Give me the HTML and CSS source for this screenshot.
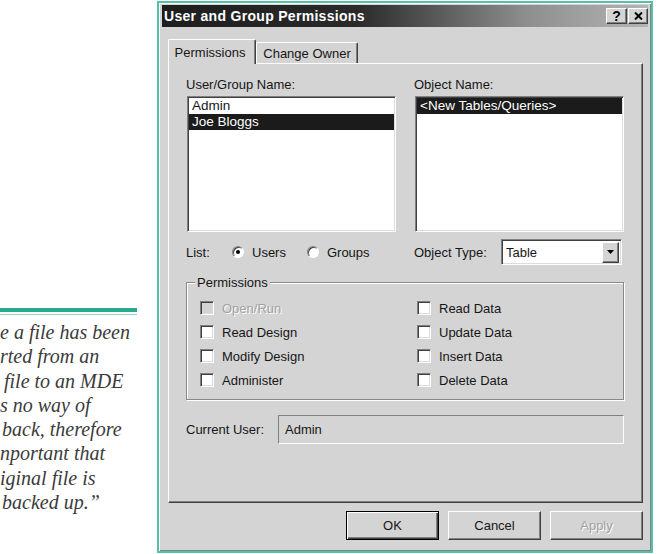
FILE: index.html
```html
<!DOCTYPE html>
<html lang="en">

<head>
    <meta charset="UTF-8">
    <meta name="viewport" content="width=device-width, initial-scale=1.0">
    <title>User and Group Permissions</title>
    <link rel="stylesheet" href="styles.css">
</head>

<body>
    <div class="margin-note">
        <div class="rule"></div>
        <div class="quote">
            <div class="line">e a file has been</div>
            <div class="line">rted from an</div>
            <div class="line indent">file to an MDE</div>
            <div class="line">s no way of</div>
            <div class="line nudge">back, therefore</div>
            <div class="line">nportant that</div>
            <div class="line">iginal file is</div>
            <div class="line nudge">backed up.&rdquo;</div>
        </div>
    </div>

    <div class="dialog">
        <div class="titlebar">
            <span class="title">User and Group Permissions</span>
            <div class="caption-buttons">
                <span class="cap-btn help">?</span>
                <span class="cap-btn close">
                    <svg width="9" height="8" viewBox="0 0 9 8">
                        <path d="M1 0.5 L8 7.5 M8 0.5 L1 7.5" stroke="#000" stroke-width="2" fill="none" />
                    </svg>
                </span>
            </div>
        </div>

        <div class="tabs">
            <div class="tab active">Permissions</div>
            <div class="tab">Change Owner</div>
        </div>

        <div class="panel">
            <div class="columns">
                <div class="col">
                    <div class="field-label">User/Group Name:</div>
                    <ul class="listbox">
                        <li>Admin</li>
                        <li class="selected">Joe Bloggs</li>
                    </ul>
                    <div class="option-row">
                        <span class="list-label">List:</span>
                        <span class="radio checked"></span>
                        <span class="radio-text">Users</span>
                        <span class="radio"></span>
                        <span class="radio-text">Groups</span>
                    </div>
                </div>
                <div class="col">
                    <div class="field-label">Object Name:</div>
                    <ul class="listbox">
                        <li class="selected">&lt;New Tables/Queries&gt;</li>
                    </ul>
                    <div class="option-row">
                        <span>Object Type:</span>
                        <div class="combo">
                            <span class="combo-value">Table</span>
                            <span class="combo-arrow">
                                <svg width="7" height="4" viewBox="0 0 7 4">
                                    <path d="M0 0 H7 L3.5 4 Z" fill="#000" />
                                </svg>
                            </span>
                        </div>
                    </div>
                </div>
            </div>

            <fieldset class="perms">
                <legend>Permissions</legend>
                <div class="perm-grid">
                    <div class="check disabled"><span class="box"></span>Open/Run</div>
                    <div class="check"><span class="box"></span>Read Data</div>
                    <div class="check"><span class="box"></span>Read Design</div>
                    <div class="check"><span class="box"></span>Update Data</div>
                    <div class="check"><span class="box"></span>Modify Design</div>
                    <div class="check"><span class="box"></span>Insert Data</div>
                    <div class="check"><span class="box"></span>Administer</div>
                    <div class="check"><span class="box"></span>Delete Data</div>
                </div>
            </fieldset>

            <div class="current-user">
                <span class="cu-label">Current User:</span>
                <div class="cu-field">Admin</div>
            </div>
        </div>

        <div class="buttons">
            <div class="btn default">OK</div>
            <div class="btn">Cancel</div>
            <div class="btn disabled">Apply</div>
        </div>
    </div>
</body>

</html>
```

FILE: styles.css
```css
body {
    margin: 0;
    width: 670px;
    height: 554px;
    overflow: hidden;
    background: #fff;
    display: flex;
    align-items: flex-start;
    font-family: "Liberation Sans", Arial, sans-serif;
}

/* quote on the left page margin */
.margin-note {
    width: 157px;
    flex: none;
    padding-top: 308px;
    overflow: hidden;
}

.rule {
    width: 137px;
    height: 2px;
    border-top: 4px solid #2aa98f;
    border-bottom: 1px solid #93d6c7;
}

.quote {
    margin-top: 5px;
    font-family: "Liberation Serif", "Times New Roman", serif;
    font-style: italic;
    font-size: 20px;
    line-height: 24.3px;
    color: #3b3b3b;
    white-space: nowrap;
}

.quote .indent {
    margin-left: 4px;
}

.quote .nudge {
    margin-left: 2px;
}

/* dialog window */
.dialog {
    width: 496px;
    height: 552px;
    margin-top: 1px;
    box-sizing: border-box;
    border: 2px solid #52c3a9;
    background: #d4d4d4;
    padding: 3px;
    display: flex;
    flex-direction: column;
    box-shadow: inset 1px 1px #fff, inset -1px -1px #808080;
    font-size: 13px;
    color: #161616;
}

.titlebar {
    height: 22px;
    flex: none;
    display: flex;
    align-items: center;
    justify-content: space-between;
    padding-left: 2px;
    margin-top: -1px;
    background: linear-gradient(to right, #1e1e1e, #2a2a2a 40%, #8e8e8e 75%, #b4b4b4);
}

.title {
    color: #fff;
    font-weight: bold;
    font-size: 14px;
    letter-spacing: 0.3px;
}

.caption-buttons {
    display: flex;
    gap: 1px;
}

.cap-btn {
    width: 19px;
    height: 14px;
    background: #d4d4d4;
    border: 1px solid;
    border-color: #fff #404040 #404040 #fff;
    box-shadow: inset -1px -1px #808080;
    display: flex;
    align-items: center;
    justify-content: center;
    font-weight: bold;
    font-size: 14px;
    color: #000;
}

.cap-btn.close {
    width: 18px;
}

/* tabs */
.tabs {
    display: flex;
    align-items: flex-end;
    height: 25px;
    margin: 11px 0 0 6px;
}

.tab {
    height: 21px;
    width: 102px;
    box-sizing: border-box;
    display: flex;
    align-items: center;
    justify-content: center;
    border: 1px solid;
    border-color: #fff #404040 transparent #fff;
    border-bottom: none;
    border-radius: 2px 2px 0 0;
    box-shadow: inset -1px 0 #808080;
    padding-top: 1px;
}

.tab.active {
    width: 88px;
    height: 25px;
    margin-bottom: -1px;
    position: relative;
    z-index: 1;
    background: #d4d4d4;
    padding: 0 4px 0 0;
}

/* tab page */
.panel {
    margin-left: 6px;
    width: 475px;
    height: 440px;
    flex: none;
    box-sizing: border-box;
    border: 1px solid;
    border-color: #fff #404040 #404040 #fff;
    box-shadow: inset -1px -1px #808080;
    padding: 13px 18px 0 17px;
}

.columns {
    display: grid;
    grid-template-columns: 1fr 1fr;
    column-gap: 18px;
}

.field-label {
    line-height: 15px;
    margin-bottom: 4px;
}

.listbox {
    list-style: none;
    margin: 0 0 0 1px;
    padding: 1px 0 0;
    height: 136px;
    box-sizing: border-box;
    background: #fff;
    border: 1px solid;
    border-color: #808080 #fff #fff #808080;
    box-shadow: inset 1px 1px #404040, inset -1px -1px #dcdcdc;
}

.listbox li {
    height: 16px;
    line-height: 16px;
    padding-left: 3px;
    margin: 0 1px 0 1px;
    font-size: 13.5px;
}

.listbox li.selected {
    background: #1b1b1b;
    color: #fff;
}

.option-row {
    display: flex;
    align-items: center;
    height: 26px;
    margin-top: 7px;
}

.list-label {
    width: 46px;
}

.radio {
    width: 10px;
    height: 10px;
    border-radius: 50%;
    background: #fff;
    border: 1px solid;
    border-color: #808080 #fff #fff #808080;
    box-shadow: inset 1px 1px #404040;
    display: flex;
    align-items: center;
    justify-content: center;
}

.radio.checked::after {
    content: "";
    width: 4px;
    height: 4px;
    border-radius: 50%;
    background: #000;
}

.radio-text {
    margin: 0 21px 0 8px;
}

.combo {
    margin-left: auto;
    margin-right: 2px;
    width: 121px;
    height: 26px;
    box-sizing: border-box;
    background: #fff;
    border: 1px solid;
    border-color: #808080 #fff #fff #808080;
    box-shadow: inset 1px 1px #404040, inset -1px -1px #dcdcdc;
    display: flex;
    align-items: center;
    padding: 2px 2px 2px 4px;
}

.combo-value {
    flex: 1;
}

.combo-arrow {
    width: 15px;
    height: 19px;
    background: #d4d4d4;
    border: 1px solid;
    border-color: #fff #404040 #404040 #fff;
    box-shadow: inset -1px -1px #808080;
    display: flex;
    align-items: center;
    justify-content: center;
}

/* permissions group */
.perms {
    margin: 10px 0 0;
    padding: 6px 0 7px 8px;
    border: 1px solid #888;
    box-shadow: inset 1px 1px #fff, 1px 1px #fff;
}

.perms legend {
    padding: 0 2px;
    line-height: 15px;
    background: #d4d4d4;
}

.perm-grid {
    display: grid;
    grid-template-columns: 217px 1fr;
    grid-auto-rows: 24px;
    margin-left: 5px;
}

.check {
    display: flex;
    align-items: center;
    gap: 8px;
}

.box {
    width: 12px;
    height: 12px;
    background: #fff;
    border: 1px solid;
    border-color: #808080 #fff #fff #808080;
    box-shadow: inset 1px 1px #404040, inset -1px -1px #dcdcdc;
}

.check.disabled {
    color: #a2a2a2;
    text-shadow: 1px 1px #fff;
}

.check.disabled .box {
    background: #d4d4d4;
}

/* current user */
.current-user {
    display: flex;
    align-items: center;
    margin-top: 15px;
}

.cu-label {
    width: 92px;
}

.cu-field {
    flex: 1;
    height: 29px;
    box-sizing: border-box;
    display: flex;
    align-items: center;
    padding-left: 6px;
    border: 1px solid;
    border-color: #808080 #fff #fff #808080;
}

/* dialog buttons */
.buttons {
    display: flex;
    justify-content: flex-end;
    gap: 9px;
    margin: 8px 5px 0 0;
}

.btn {
    width: 93px;
    height: 29px;
    box-sizing: border-box;
    display: flex;
    align-items: center;
    justify-content: center;
    border: 1px solid;
    border-color: #fff #404040 #404040 #fff;
    box-shadow: inset -1px -1px #808080;
}

.btn.default {
    border-color: #000;
    box-shadow: inset 1px 1px #fff, inset -1px -1px #404040, inset -2px -2px #808080;
}

.btn.disabled {
    color: #a2a2a2;
    text-shadow: 1px 1px #fff;
}
```
